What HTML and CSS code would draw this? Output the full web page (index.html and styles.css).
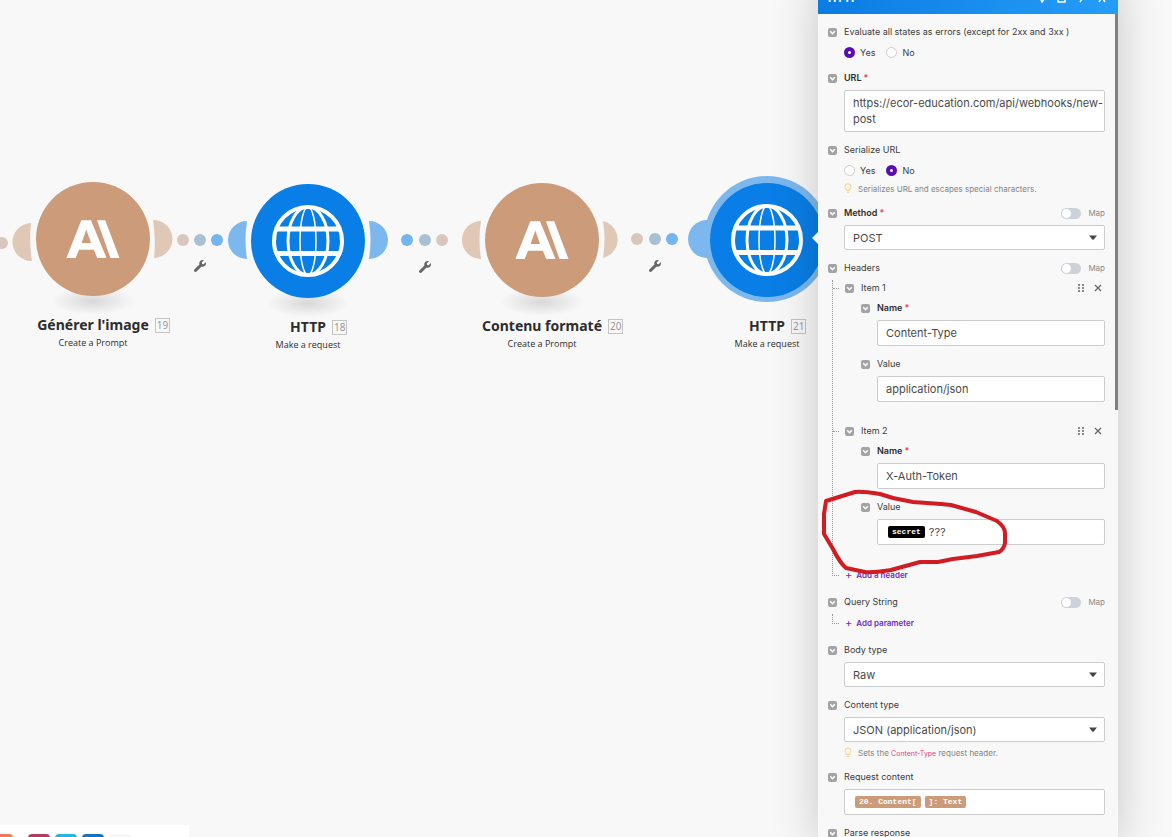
FILE: index.html
```
<!DOCTYPE html>
<html lang="en">
<head>
    <meta charset="UTF-8">
    <meta name="viewport" content="width=device-width, initial-scale=1.0">
    <title>Scenario editor</title>
    <link rel="stylesheet" href="styles.css">
</head>
<body>
    <svg class="defs" aria-hidden="true">
        <defs>
            <radialGradient id="ground">
                <stop offset="0" stop-color="#000" stop-opacity="0.13"/>
                <stop offset="1" stop-color="#000" stop-opacity="0"/>
            </radialGradient>
        </defs>
        <symbol id="i-collapse" viewBox="0 0 9 9">
            <rect width="9" height="9" rx="2" fill="#a3a3a3"/>
            <path d="M2.2 3.3 4.5 5.7 6.8 3.3" fill="none" stroke="#fff" stroke-width="1.6"/>
        </symbol>
        <symbol id="i-wrench" viewBox="0 0 512 512">
            <path fill="#666" d="M507.700 109.100c-2.200-9-13.500-12.100-20.100-5.500l-74.400 74.400-67.900-11.300L334 98.900l74.400-74.400c6.600-6.600 3.400-17.900-5.700-20.200-47.400-11.700-99.600.9-136.600 37.900-39.600 39.600-50.500 97.100-34.100 147.200L18.700 402.800c-25 25-25 65.500 0 90.500s65.500 25 90.500 0l213.200-213.200c50.100 16.700 107.500 5.700 147.400-34.200 37.100-37.100 49.700-89.300 37.900-136.800z"/>
        </symbol>
        <symbol id="i-globe" viewBox="-38 -38 76 76">
            <g fill="none" stroke="#fff">
                <circle r="34" stroke-width="4"/>
                <ellipse rx="20" ry="34" stroke-width="3"/>
                <ellipse rx="8" ry="34" stroke-width="1.500"/>
                <path d="M-32-12H32M-32 12.500H32" stroke-width="5"/>
            </g>
        </symbol>
        <symbol id="i-prompt" viewBox="-38 -38 76 76">
            <path fill="#fff" fill-rule="evenodd" d="M-11.700-18.700H-2L13.500 19H4.200L.9 10.700H-14L-17.300 19H-26.600ZM-6.700-9.500-11.400 4H-2ZM4-18.700H12.200L26.500 19H17.500Z"/>
        </symbol>
        <symbol id="i-bulb" viewBox="0 0 8 11">
            <path d="M2.600 7.500C2.600 6.200 1 5.600 1 3.800a3 3 0 0 1 6 0C7 5.600 5.400 6.200 5.400 7.500ZM2.800 9.300H5.200" fill="none" stroke="#f8cd7c"/>
        </symbol>
        <symbol id="i-drag" viewBox="0 0 6 8">
            <path d="M0 0h2v2H0zM4 0h2v2H4zM0 3h2v2H0zM4 3h2v2H4zM0 6h2v2H0zM4 6h2v2H4z" fill="#8a8a8a"/>
        </symbol>
        <symbol id="i-close" viewBox="0 0 8 8">
            <path d="M1 1 7 7M7 1 1 7" stroke="#666" stroke-width="1.300"/>
        </symbol>
        <symbol id="i-caret" viewBox="0 0 8 5">
            <path d="M0 .5H8L4.500 4.700h-1z" fill="#444"/>
        </symbol>
    </svg>

    <main class="canvas">
        <!-- routes between the modules -->
        <svg class="routes" width="820" height="320" aria-hidden="true">
            <g fill="#e0c8b6">
                <path d="M31 223A19 19 0 0 0 32 261Q29 242 31 223Z"/>
                <path d="M153 220A19 19 0 0 1 154 258Q156 239 153 220Z"/>
                <path d="M481 221A19 19 0 0 0 481 259Q478 240 481 221Z"/>
                <path d="M603 221A19 19 0 0 1 603 258Q606 239 603 221Z"/>
            </g>
            <g fill="#7cb8ed">
                <path d="M247 221A19 19 0 0 0 247 259Q244 240 247 221Z"/>
                <path d="M369 221A19 19 0 0 1 369 259Q372 240 369 221Z"/>
                <circle cx="707" cy="239" r="19"/>
                <circle cx="767" cy="239" r="63"/>
            </g>
            <g fill="#d9c6bd">
                <circle cx="2" cy="243" r="6"/>
                <circle cx="183" cy="240" r="6"/>
                <circle cx="442" cy="240" r="6"/>
                <circle cx="637" cy="239" r="6"/>
            </g>
            <g fill="#a9bfd2">
                <circle cx="200" cy="240" r="6"/>
                <circle cx="425" cy="240" r="6"/>
                <circle cx="655" cy="239" r="6"/>
            </g>
            <g fill="#74b5f0">
                <circle cx="217" cy="240" r="6"/>
                <circle cx="407" cy="240" r="6"/>
                <circle cx="672" cy="239" r="6"/>
            </g>
            <use href="#i-wrench" x="194" y="260" width="12" height="12"/>
            <use href="#i-wrench" x="419" y="261" width="12" height="12"/>
            <use href="#i-wrench" x="649" y="260" width="12" height="12"/>
            <g fill="url(#ground)">
                <ellipse cx="93" cy="301" rx="42" ry="14"/>
                <ellipse cx="308" cy="303" rx="42" ry="14"/>
                <ellipse cx="542" cy="302" rx="42" ry="14"/>
            </g>
        </svg>

        <article class="node node-prompt node-19">
            <div class="disc"><svg><use href="#i-prompt"/></svg></div>
            <h2>Générer l'image<span class="badge">19</span></h2>
            <p>Create a Prompt</p>
        </article>
        <article class="node node-http node-18">
            <div class="disc"><svg><use href="#i-globe"/></svg></div>
            <h2>HTTP<span class="badge">18</span></h2>
            <p>Make a request</p>
        </article>
        <article class="node node-prompt node-20">
            <div class="disc"><svg><use href="#i-prompt"/></svg></div>
            <h2>Contenu formaté<span class="badge">20</span></h2>
            <p>Create a Prompt</p>
        </article>
        <article class="node node-http node-21">
            <div class="disc"><svg><use href="#i-globe"/></svg></div>
            <h2>HTTP<span class="badge">21</span></h2>
            <p>Make a request</p>
        </article>
    </main>

    <nav class="toolbar" aria-label="Favorites">
        <button class="app app-orange" aria-label="Flow control"></button>
        <button class="app app-red" aria-label="Tools"></button>
        <button class="app app-cyan" aria-label="Text parser"></button>
        <button class="app app-blue" aria-label="HTTP"></button>
        <button class="app app-more" aria-label="More"></button>
    </nav>

    <aside class="panel">
        <header class="panel-head">
            <h1>HTTP</h1>
            <svg width="68" height="12" viewBox="0 0 68 12" fill="none" stroke="#fff" stroke-width="1.500" aria-hidden="true">
                <path d="M1 3 4 10 7 6M20 3V10H27V3M42 10 46 4M61 1 67 10M67 1 61 10"/>
            </svg>
        </header>

        <form class="panel-body">
            <section class="field">
                <div class="field-head">
                    <button type="button" class="collapse" aria-label="Collapse"><svg><use href="#i-collapse"/></svg></button>
                    <span id="errors-label">Evaluate all states as errors (except for 2xx and 3xx )</span>
                </div>
                <div class="choices" role="radiogroup" aria-labelledby="errors-label">
                    <label><input type="radio" name="errors" checked>Yes</label>
                    <label><input type="radio" name="errors">No</label>
                </div>
            </section>

            <section class="field">
                <div class="field-head">
                    <button type="button" class="collapse" aria-label="Collapse"><svg><use href="#i-collapse"/></svg></button>
                    <label for="url" class="required">URL</label>
                </div>
                <textarea id="url" class="control" rows="2" spellcheck="false">https://ecor-education.com/api/webhooks/new-post</textarea>
            </section>

            <section class="field">
                <div class="field-head">
                    <button type="button" class="collapse" aria-label="Collapse"><svg><use href="#i-collapse"/></svg></button>
                    <span id="serialize-label">Serialize URL</span>
                </div>
                <div class="choices" role="radiogroup" aria-labelledby="serialize-label">
                    <label><input type="radio" name="serialize">Yes</label>
                    <label><input type="radio" name="serialize" checked>No</label>
                </div>
                <p class="hint"><svg><use href="#i-bulb"/></svg>Serializes URL and escapes special characters.</p>
            </section>

            <section class="field">
                <div class="field-head">
                    <button type="button" class="collapse" aria-label="Collapse"><svg><use href="#i-collapse"/></svg></button>
                    <label for="method" class="required">Method</label>
                    <label class="map"><input type="checkbox">Map</label>
                </div>
                <div class="select">
                    <select id="method" class="control"><option>POST</option></select>
                    <svg><use href="#i-caret"/></svg>
                </div>
            </section>

            <section class="field">
                <div class="field-head">
                    <button type="button" class="collapse" aria-label="Collapse"><svg><use href="#i-collapse"/></svg></button>
                    <span>Headers</span>
                    <label class="map"><input type="checkbox">Map</label>
                </div>
                <div class="items">
                    <section class="item">
                        <div class="field-head">
                            <button type="button" class="collapse" aria-label="Collapse"><svg><use href="#i-collapse"/></svg></button>
                            <span>Item 1</span>
                            <button type="button" class="drag" aria-label="Move"><svg><use href="#i-drag"/></svg></button>
                            <button type="button" class="remove" aria-label="Remove"><svg><use href="#i-close"/></svg></button>
                        </div>
                        <div class="item-fields">
                            <div class="field">
                                <div class="field-head">
                                    <button type="button" class="collapse" aria-label="Collapse"><svg><use href="#i-collapse"/></svg></button>
                                    <label for="name1" class="required">Name</label>
                                </div>
                                <input id="name1" class="control" type="text" value="Content-Type">
                            </div>
                            <div class="field">
                                <div class="field-head">
                                    <button type="button" class="collapse" aria-label="Collapse"><svg><use href="#i-collapse"/></svg></button>
                                    <label for="value1">Value</label>
                                </div>
                                <input id="value1" class="control" type="text" value="application/json">
                            </div>
                        </div>
                    </section>
                    <section class="item">
                        <div class="field-head">
                            <button type="button" class="collapse" aria-label="Collapse"><svg><use href="#i-collapse"/></svg></button>
                            <span>Item 2</span>
                            <button type="button" class="drag" aria-label="Move"><svg><use href="#i-drag"/></svg></button>
                            <button type="button" class="remove" aria-label="Remove"><svg><use href="#i-close"/></svg></button>
                        </div>
                        <div class="item-fields">
                            <div class="field">
                                <div class="field-head">
                                    <button type="button" class="collapse" aria-label="Collapse"><svg><use href="#i-collapse"/></svg></button>
                                    <label for="name2" class="required">Name</label>
                                </div>
                                <input id="name2" class="control" type="text" value="X-Auth-Token">
                            </div>
                            <div class="field">
                                <div class="field-head">
                                    <button type="button" class="collapse" aria-label="Collapse"><svg><use href="#i-collapse"/></svg></button>
                                    <span id="value2-label">Value</span>
                                </div>
                                <div class="control rich" contenteditable="true" role="textbox" aria-labelledby="value2-label" spellcheck="false"><span class="pill pill-black">secret</span><span>???</span></div>
                            </div>
                        </div>
                    </section>
                    <button type="button" class="add"><b>+</b>Add a header</button>
                </div>
            </section>

            <section class="field">
                <div class="field-head">
                    <button type="button" class="collapse" aria-label="Collapse"><svg><use href="#i-collapse"/></svg></button>
                    <span>Query String</span>
                    <label class="map"><input type="checkbox">Map</label>
                </div>
                <div class="items">
                    <button type="button" class="add"><b>+</b>Add parameter</button>
                </div>
            </section>

            <section class="field">
                <div class="field-head">
                    <button type="button" class="collapse" aria-label="Collapse"><svg><use href="#i-collapse"/></svg></button>
                    <label for="body-type">Body type</label>
                </div>
                <div class="select">
                    <select id="body-type" class="control"><option>Raw</option></select>
                    <svg><use href="#i-caret"/></svg>
                </div>
            </section>

            <section class="field">
                <div class="field-head">
                    <button type="button" class="collapse" aria-label="Collapse"><svg><use href="#i-collapse"/></svg></button>
                    <label for="content-type">Content type</label>
                </div>
                <div class="select">
                    <select id="content-type" class="control"><option>JSON (application/json)</option></select>
                    <svg><use href="#i-caret"/></svg>
                </div>
                <p class="hint"><svg><use href="#i-bulb"/></svg><span>Sets the <code>Content-Type</code> request header.</span></p>
            </section>

            <section class="field">
                <div class="field-head">
                    <button type="button" class="collapse" aria-label="Collapse"><svg><use href="#i-collapse"/></svg></button>
                    <span id="content-label">Request content</span>
                </div>
                <div class="control rich" contenteditable="true" role="textbox" aria-labelledby="content-label" spellcheck="false"><span class="pill">20. Content[</span><span class="pill">]: Text</span></div>
            </section>

            <section class="field">
                <div class="field-head">
                    <button type="button" class="collapse" aria-label="Collapse"><svg><use href="#i-collapse"/></svg></button>
                    <span>Parse response</span>
                </div>
            </section>
        </form>

        <div class="scrollbar"></div>
        <svg class="marker" viewBox="0 0 186 86" aria-hidden="true">
            <path d="M5 12 34 3Q40 2 59 5L72 9 92 13 120 15 130 16 155 23 176 32Q184 38 184 44V54Q183 60 178 63L156 67 132 70 117 73 99 73 70 81Q50 84 44 83L25 79Q19 74 12 60L3 45 3 25 5 12"/>
        </svg>
    </aside>
</body>
</html>
```
FILE: styles.css
```
* {
    box-sizing: border-box;
}

body {
    margin: 0;
    height: 100vh;
    position: relative;
    overflow: hidden;
    background-color: #f8f8f8;
    color: #3c3c3c;
    font-family: Inter, "Liberation Sans", sans-serif;
    font-size: 9px;
}

h1, h2, p {
    margin: 0;
}

button {
    padding: 0;
    border: none;
    background: none;
    font-family: inherit;
    cursor: pointer;
}

svg {
    display: block;
}

.defs {
    position: absolute;
    width: 0;
    height: 0;
}

/* canvas */

.canvas {
    position: absolute;
    inset: 0;
    overflow: hidden;
    font-family: "Open Sans", "Noto Sans", sans-serif;
}

.routes {
    position: absolute;
    left: 0;
    top: 0;
}

.node {
    position: absolute;
    width: 114px;
    display: flex;
    flex-direction: column;
    align-items: center;
    color: #2d2d2d;
}

.node-19 { left: 36px; top: 182px; }
.node-18 { left: 251px; top: 184px; }
.node-20 { left: 485px; top: 183px; }
.node-21 { left: 710px; top: 183px; }

.disc {
    width: 114px;
    height: 114px;
    border-radius: 50%;
    display: flex;
    align-items: center;
    justify-content: center;
}

.disc svg {
    width: 76px;
    height: 76px;
}

.node-prompt .disc {
    background-color: #cc9b7a;
}

.node-http .disc {
    background-color: #097ee6;
}

.node h2 {
    position: relative;
    margin-top: 19px;
    font-family: "Noto Sans", "Open Sans", sans-serif;
    font-size: 14px;
    line-height: 20px;
    white-space: nowrap;
}

.badge {
    position: absolute;
    left: 100%;
    top: 3px;
    margin-left: 6px;
    padding: 0 1px;
    border: 1px solid #c4c4c4;
    color: #999;
    font-size: 10px;
    font-weight: normal;
    line-height: 13px;
}

.node p {
    font-size: 9px;
    line-height: 16px;
}

/* bottom toolbar */

.toolbar {
    position: absolute;
    left: 0;
    bottom: -28px;
    width: 189px;
    height: 40px;
    padding: 9px 0;
    display: flex;
    gap: 5px;
    background-color: #fff;
}

.app {
    width: 22px;
    height: 22px;
    border-radius: 4px;
}

.app-orange {
    width: 13px;
    margin-right: 10px;
    border-radius: 0 4px 4px 0;
    background-color: #ef7a54;
}

.app-red { background-color: #b93a5e; }
.app-cyan { background-color: #1fb6e2; }
.app-blue { background-color: #1272c8; }
.app-more { background-color: #f7f7f7; }

/* module settings */

.panel {
    position: absolute;
    top: -26px;
    right: 54px;
    bottom: 0;
    width: 300px;
    background-color: #f8f8f8;
    box-shadow: 0 8px 44px rgba(0, 0, 0, 0.2);
}

.panel::before {
    content: "";
    position: absolute;
    left: -6px;
    top: 258px;
    border: 6px solid transparent;
    border-left: none;
    border-right-color: #f8f8f8;
}

.panel-head {
    height: 40px;
    padding: 18px 12px 0 10px;
    display: flex;
    justify-content: space-between;
    align-items: flex-start;
    background: linear-gradient(90deg, #0a7ce2, #259df8);
    color: #fff;
}

.panel-head h1 {
    font-size: 11px;
    line-height: 12px;
}

.panel-body {
    padding: 10px 13px 0 10px;
}

.field + .field {
    margin-top: 10px;
}

.field-head {
    height: 16px;
    display: flex;
    align-items: center;
    line-height: 16px;
}

.field > :not(.field-head) {
    margin-top: 4px;
    margin-left: 16px;
}

.collapse {
    width: 9px;
    height: 9px;
    margin-right: 7px;
}

.collapse svg {
    width: 9px;
    height: 9px;
}

.required {
    font-weight: 600;
    color: #2d2d2d;
}

.required::after {
    content: "*";
    margin-left: 2px;
    color: #e8435a;
}

.choices {
    height: 16px;
    display: flex;
    gap: 11px;
}

.choices label {
    display: flex;
    align-items: center;
    gap: 5px;
}

.choices input {
    appearance: none;
    width: 11px;
    height: 11px;
    margin: 0;
    border: 1px solid #ccc;
    border-radius: 50%;
    background-color: #fff;
}

.choices input:checked {
    border: 4px solid #5b0cb0;
}

.hint {
    height: 13px;
    display: flex;
    align-items: center;
    gap: 6px;
    color: #858585;
    font-size: 8px;
}

.hint svg {
    width: 8px;
    height: 11px;
}

.hint code {
    color: #e83e8c;
    font-family: inherit;
    font-size: 7px;
}

.map {
    margin-left: auto;
    display: flex;
    align-items: center;
    gap: 7px;
    color: #8a8a8a;
    font-size: 8px;
}

.map input {
    appearance: none;
    width: 20px;
    height: 11px;
    margin: 0;
    padding: 1px;
    border-radius: 6px;
    background-color: #cdd1d9;
}

.map input::before {
    content: "";
    display: block;
    width: 9px;
    height: 9px;
    border-radius: 50%;
    background-color: #fff;
}

.map input:checked::before {
    margin-left: auto;
}

.control {
    display: block;
    width: 100%;
    height: 26px;
    padding: 4px 8px;
    border: 1px solid #ccc;
    border-radius: 2px;
    background-color: #fff;
    color: #4a4a4a;
    font-family: inherit;
    font-size: 11px;
    line-height: 16px;
}

.field > .control {
    width: calc(100% - 16px);
}

textarea.control {
    height: 42px;
    padding-right: 0;
    resize: none;
    overflow: hidden;
}

.select {
    position: relative;
}

.select .control {
    height: 25px;
    appearance: none;
}

.select svg {
    position: absolute;
    right: 8px;
    top: 10px;
    width: 8px;
    height: 5px;
    pointer-events: none;
}

.rich {
    padding-left: 10px;
    display: flex;
    align-items: center;
    gap: 4px;
}

.pill {
    padding: 0 4px;
    border-radius: 2px;
    background-color: #cc9b7a;
    color: #fff;
    font-family: "Liberation Mono", monospace;
    font-size: 8px;
    font-weight: bold;
    line-height: 12px;
}

.pill-black {
    background-color: #000;
}

/* nested items hang on a dotted line */

.field > .items {
    position: relative;
    margin-left: 17px;
}

.items::before {
    content: "";
    position: absolute;
    left: -13px;
    top: 0;
    bottom: 8px;
    width: 6px;
    border-left: 1px dotted #999;
    border-bottom: 1px dotted #999;
}

.item {
    position: relative;
    margin-bottom: 21px;
}

.item::before {
    content: "";
    position: absolute;
    left: -12px;
    top: 8px;
    width: 6px;
    border-top: 1px dotted #999;
}

.item-fields {
    padding: 4px 0 0 16px;
}

.drag {
    margin-left: auto;
    margin-right: 10px;
}

.drag svg {
    width: 6px;
    height: 8px;
}

.remove {
    margin-right: 3px;
}

.remove svg {
    width: 8px;
    height: 8px;
}

.add {
    height: 18px;
    display: flex;
    align-items: center;
    gap: 4px;
    color: #7429bd;
    font-size: 8px;
    font-weight: 600;
}

.add b {
    font-size: 11px;
    font-weight: normal;
}

.scrollbar {
    position: absolute;
    right: 0;
    top: 40px;
    width: 3px;
    height: 396px;
    background-color: #808080;
}

/* red pen mark */

.marker {
    position: absolute;
    left: 3px;
    top: 515px;
    width: 186px;
    height: 86px;
    overflow: visible;
    pointer-events: none;
}

.marker path {
    fill: none;
    stroke: #d01c22;
    stroke-width: 4;
    stroke-linecap: round;
    stroke-linejoin: round;
}
```
